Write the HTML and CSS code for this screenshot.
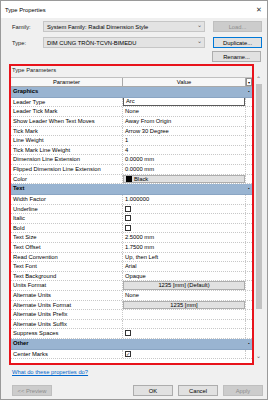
FILE: index.html
```html
<!DOCTYPE html>
<html lang="en">
  <head>
    <meta charset="UTF-8" />
    <title>Type Properties</title>
    <link rel="stylesheet" href="styles.css">
  </head>
  <body>
    <div class="dialog">
      <div class="titlebar">
        <span class="title">Type Properties</span>
        <span class="close">&#x2715;</span>
      </div>
      <div class="content">
        <div class="toprow">
          <span class="label">Family:</span>
          <div class="combo"><span>System Family: Radial Dimension Style</span><span class="caret">&#x2304;</span></div>
          <div class="btn disabled">Load...</div>
        </div>
        <div class="toprow second">
          <span class="label">Type:</span>
          <div class="combo"><span>DIM CUNG TRÒN-TCVN-BIMEDU</span><span class="caret">&#x2304;</span></div>
          <div class="btn focused">Duplicate...</div>
        </div>
        <div class="toprow third">
          <div class="btn">Rename...</div>
        </div>

        <div class="panel">
          <div class="params">
            <div class="legend">Type Parameters</div>
            <div class="grid">
              <div class="row head">
                <div class="cell">Parameter</div>
                <div class="cell">Value</div>
                <div class="cell mini">&#x25BE;</div>
              </div>

              <div class="row group"><div class="cell">Graphics</div><div class="cell"></div><div class="cell mini">&#x25AA;</div></div>
              <div class="row"><div class="cell">Leader Type</div><div class="cell"><div class="edit">Arc</div></div><div class="cell mini"></div></div>
              <div class="row"><div class="cell">Leader Tick Mark</div><div class="cell">None</div><div class="cell mini"></div></div>
              <div class="row"><div class="cell">Show Leader When Text Moves</div><div class="cell">Away From Origin</div><div class="cell mini"></div></div>
              <div class="row"><div class="cell">Tick Mark</div><div class="cell">Arrow 30 Degree</div><div class="cell mini"></div></div>
              <div class="row"><div class="cell">Line Weight</div><div class="cell">1</div><div class="cell mini"></div></div>
              <div class="row"><div class="cell">Tick Mark Line Weight</div><div class="cell">4</div><div class="cell mini"></div></div>
              <div class="row"><div class="cell">Dimension Line Extension</div><div class="cell">0.0000 mm</div><div class="cell mini"></div></div>
              <div class="row"><div class="cell">Flipped Dimension Line Extension</div><div class="cell">0.0000 mm</div><div class="cell mini"></div></div>
              <div class="row"><div class="cell">Color</div><div class="cell"><div class="pick"><span class="swatch"></span>Black</div></div><div class="cell mini"></div></div>

              <div class="row group"><div class="cell">Text</div><div class="cell"></div><div class="cell mini">&#x25AA;</div></div>
              <div class="row"><div class="cell">Width Factor</div><div class="cell">1.000000</div><div class="cell mini"></div></div>
              <div class="row"><div class="cell">Underline</div><div class="cell"><span class="check"></span></div><div class="cell mini"></div></div>
              <div class="row"><div class="cell">Italic</div><div class="cell"><span class="check"></span></div><div class="cell mini"></div></div>
              <div class="row"><div class="cell">Bold</div><div class="cell"><span class="check"></span></div><div class="cell mini"></div></div>
              <div class="row"><div class="cell">Text Size</div><div class="cell">2.5000 mm</div><div class="cell mini"></div></div>
              <div class="row"><div class="cell">Text Offset</div><div class="cell">1.7500 mm</div><div class="cell mini"></div></div>
              <div class="row"><div class="cell">Read Convention</div><div class="cell">Up, then Left</div><div class="cell mini"></div></div>
              <div class="row"><div class="cell">Text Font</div><div class="cell">Arial</div><div class="cell mini"></div></div>
              <div class="row"><div class="cell">Text Background</div><div class="cell">Opaque</div><div class="cell mini"></div></div>
              <div class="row"><div class="cell">Units Format</div><div class="cell"><div class="pick center">1235 [mm] (Default)</div></div><div class="cell mini"></div></div>
              <div class="row"><div class="cell">Alternate Units</div><div class="cell">None</div><div class="cell mini"></div></div>
              <div class="row"><div class="cell">Alternate Units Format</div><div class="cell"><div class="pick center">1235 [mm]</div></div><div class="cell mini"></div></div>
              <div class="row"><div class="cell">Alternate Units Prefix</div><div class="cell"></div><div class="cell mini"></div></div>
              <div class="row"><div class="cell">Alternate Units Suffix</div><div class="cell"></div><div class="cell mini"></div></div>
              <div class="row"><div class="cell">Suppress Spaces</div><div class="cell"><span class="check"></span></div><div class="cell mini"></div></div>

              <div class="row group"><div class="cell">Other</div><div class="cell"></div><div class="cell mini">&#x25AA;</div></div>
              <div class="row"><div class="cell">Center Marks</div><div class="cell"><span class="check on">&#x2713;</span></div><div class="cell mini"></div></div>
            </div>
          </div>
          <div class="scroll">
            <div class="arrow">&#x2303;</div>
            <div class="track"><div class="thumb"></div></div>
            <div class="arrow">&#x2304;</div>
          </div>
        </div>

        <a class="help" href="#">What do these properties do?</a>

        <div class="buttons">
          <div class="btn disabled">&lt;&lt; Preview</div>
          <div class="spacer"></div>
          <div class="btn">OK</div>
          <div class="btn">Cancel</div>
          <div class="btn disabled">Apply</div>
        </div>
      </div>
    </div>
  </body>
</html>
```

FILE: styles.css
```css
body {
  margin: 0;
  font-family: "Liberation Sans", Arial, sans-serif;
  font-size: 5.8px;
  color: #000;
}
.dialog {
  width: 268px;
  height: 400px;
  box-sizing: border-box;
  border: 1px solid #9a9a9a;
  background-color: #f0f0f0;
  display: flex;
  flex-direction: column;
}
.titlebar {
  height: 17px;
  background-color: #fff;
  display: flex;
  align-items: center;
  justify-content: space-between;
  padding: 0 5px 0 4px;
}
.title {
  font-size: 5.8px;
}
.close {
  font-size: 7px;
  color: #333;
}
.content {
  padding: 0 4px 0 8px;
}
.toprow {
  display: flex;
  align-items: center;
  height: 11px;
  margin-top: 3px;
  padding-left: 3px;
}
.toprow.second {
  margin-top: 5px;
}
.toprow.third {
  margin-top: 3px;
  justify-content: flex-end;
  padding-right: 2px;
}
.label {
  width: 31px;
  color: #222;
}
.combo {
  width: 162px;
  height: 11px;
  box-sizing: border-box;
  border: 1px solid #c6c6c6;
  background-color: #e3e3e3;
  display: flex;
  align-items: center;
  justify-content: space-between;
  padding: 0 2px 0 3px;
  margin-right: 8px;
}
.caret {
  font-size: 6px;
  color: #555;
  line-height: 6px;
  margin-top: -3px;
}
.btn {
  width: 49px;
  height: 11px;
  box-sizing: border-box;
  border: 1px solid #adadad;
  background-color: #e1e1e1;
  display: flex;
  align-items: center;
  justify-content: center;
}
.btn.disabled {
  background-color: #cccccc;
  border-color: #bfbfbf;
  color: #8d8d8d;
}
.btn.focused {
  border-color: #0078d7;
}
.panel {
  display: flex;
  margin-top: 2px;
}
.params {
  width: 245px;
  height: 301px;
  box-sizing: border-box;
  border: 2px solid #e8131b;
  background-color: #f0f0f0;
  display: flex;
  flex-direction: column;
}
.legend {
  height: 10.5px;
  line-height: 8px;
  padding-left: 1px;
  color: #222;
}
.grid {
  flex: 1;
  background-color: #fff;
}
.row {
  display: grid;
  grid-template-columns: 112px 123px 6px;
  height: 9.6px;
  box-sizing: border-box;
  border-bottom: 1px dotted #c8c8c8;
  line-height: 8.6px;
}
.cell {
  padding-left: 2px;
  white-space: nowrap;
  overflow: hidden;
  border-right: 1px dotted #c8c8c8;
}
.cell.mini {
  padding: 0;
  border-right: none;
  font-size: 4px;
  text-align: center;
}
.row.head {
  height: 10.6px;
  line-height: 9px;
  background-color: #f7f7f7;
  border-top: 1px solid #c0c0c0;
  border-bottom: 1px solid #a9a9a9;
}
.row.head .cell {
  text-align: center;
  border-right: 1px solid #a9a9a9;
  padding: 0;
}
.row.head .mini {
  border: 1px solid #8e8e8e;
  background-color: #fff;
  font-size: 4px;
  line-height: 7px;
}
.row.group {
  height: 10.8px;
  line-height: 9.8px;
  background-color: #99b4d1;
  font-weight: bold;
  border-bottom: 1px solid #8aa5c3;
}
.row.group .cell {
  border-right: none;
}
.edit {
  margin: -1px 0 0 -2px;
  height: 9.6px;
  box-sizing: border-box;
  border: 1px solid #5a5a5a;
  background-color: #fff;
  padding-left: 2px;
  line-height: 7.6px;
}
.pick {
  margin: 0 0 0 -2px;
  height: 8.6px;
  box-sizing: border-box;
  border: 1px solid #adadad;
  background-color: #e1e1e1;
  padding-left: 2px;
  line-height: 6.6px;
  display: flex;
  align-items: center;
}
.pick.center {
  justify-content: center;
  padding-left: 0;
}
.swatch {
  width: 6px;
  height: 6px;
  background-color: #000;
  margin-right: 2px;
}
.check {
  display: inline-block;
  width: 6px;
  height: 6px;
  box-sizing: border-box;
  border: 1px solid #333;
  background-color: #fff;
  vertical-align: middle;
  margin-top: -1px;
  font-size: 5px;
  line-height: 4px;
  text-align: center;
  color: #333;
}
.scroll {
  width: 9px;
  margin-top: 11px;
  height: 286px;
  display: flex;
  flex-direction: column;
  background-color: #f0f0f0;
}
.arrow {
  height: 9px;
  font-size: 6px;
  line-height: 9px;
  text-align: center;
  color: #606060;
}
.track {
  flex: 1;
  padding: 0 1.5px;
}
.thumb {
  height: 225px;
  background-color: #c2c2c2;
}
.help {
  display: block;
  margin: 3px 0 0 3px;
  color: #0066cc;
  line-height: 8px;
}
.buttons {
  display: flex;
  margin-top: 9px;
  padding-left: 3px;
  gap: 5px;
}
.buttons .btn {
  width: 40px;
}
.spacer {
  flex: 1;
}
```
